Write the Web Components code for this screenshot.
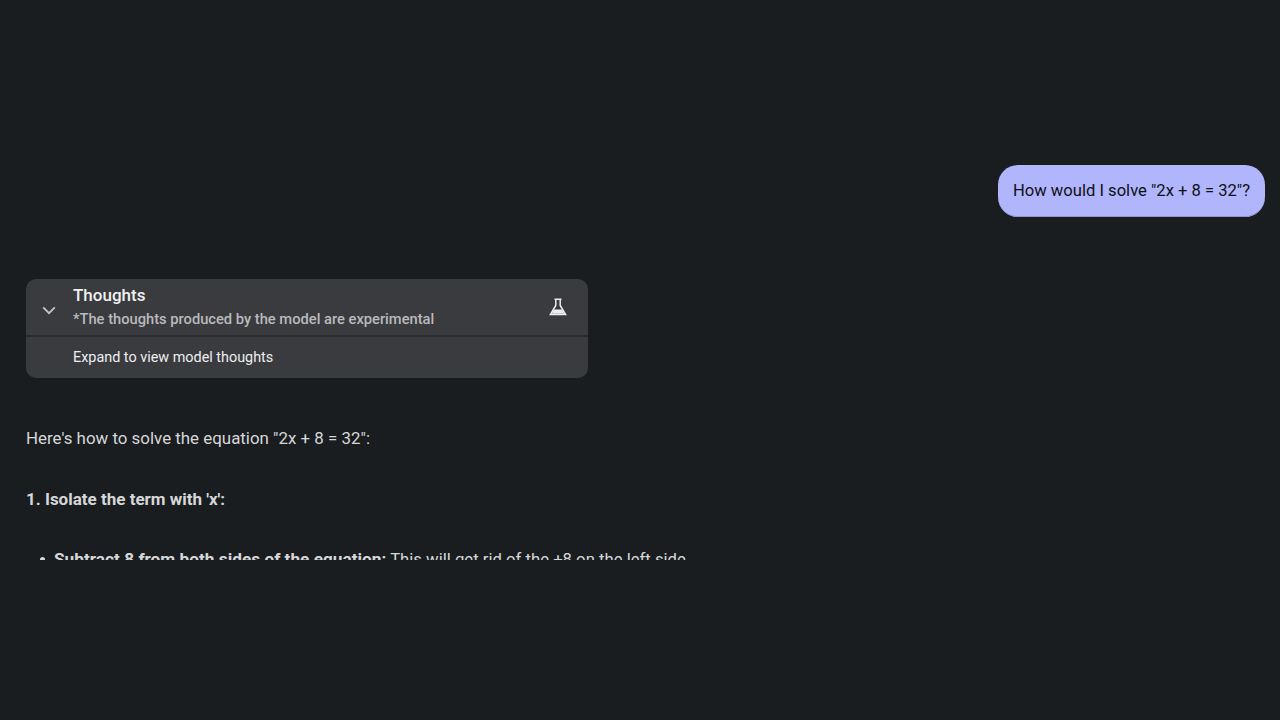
<!DOCTYPE html>
<html>
<head>
<meta charset="utf-8">
<style>
html,body{margin:0;height:100%;background:#1a1d20}
body{font-family:Roboto,"Liberation Sans",sans-serif}
</style>
</head>
<body>
<chat-view>
  <user-bubble>How would I solve "2x + 8 = 32"?</user-bubble>
  <thoughts-card title-text="Thoughts" note="*The thoughts produced by the model are experimental" hint="Expand to view model thoughts"></thoughts-card>
  <model-answer></model-answer>
</chat-view>
<script>
class ChatView extends HTMLElement {
  constructor() {
    super();
    this.attachShadow({ mode: "open" }).innerHTML = `
<style>
:host{display:flex;flex-direction:column;height:560px;overflow:hidden;box-sizing:border-box;padding:165px 15px 0 26px}
::slotted(*){flex:none}
</style>
<slot></slot>`;
  }
}
class UserBubble extends HTMLElement {
  constructor() {
    super();
    this.attachShadow({ mode: "open" }).innerHTML = `
<style>
:host{display:block;align-self:flex-end;box-sizing:border-box;height:52px;padding:0 15px;line-height:51px;border-radius:20px;background:#b1b5fb;color:#0f1116;font-size:16.6px;white-space:nowrap;box-shadow:inset 0 -1px 0 #8f93d0}
</style>
<slot></slot>`;
  }
}
class ThoughtsCard extends HTMLElement {
  constructor() {
    super();
    const root = this.attachShadow({ mode: "open" });
    root.innerHTML = `
<style>
:host{display:block;width:562px;margin-top:62px;background:#3a3b3f;border-radius:10px;overflow:hidden;color:#fff}
.head{display:flex;align-items:center;height:58px;box-sizing:border-box;border-bottom:2px solid #2a2b2f}
.chev{width:46px;display:flex;justify-content:center;flex:none;margin-top:7px}
.txt{flex:1;min-width:0;padding-left:1px}
.t{font-size:17px;font-weight:500;line-height:20px;margin-top:-1px;color:#f1f1f1}
.n{font-size:14.7px;font-weight:500;line-height:18px;margin-top:5px;color:#b9babb}
.flask{flex:none;margin-right:20px;margin-top:-1px}
.foot{height:41px;line-height:42px;padding-left:47px;font-size:14.4px;color:#eeeeef}
</style>
<div class="head">
  <div class="chev"><svg width="14" height="9" viewBox="0 0 14 9" fill="none" stroke="#c6c6c8" stroke-width="1.8"><path d="M1.2 1.4 7 7.2 12.8 1.4"/></svg></div>
  <div class="txt"><div class="t"></div><div class="n"></div></div>
  <svg class="flask" width="20" height="20" viewBox="0 0 20 20" fill="none"><path d="M6.5 2.2h7" stroke="#eee" stroke-width="1.5"/><path d="M7.8 2.5v6L2.4 17.6h15.2L12.2 8.500v-6" stroke="#eee" stroke-width="1.500"/><path d="M6 12.500h8l2.300 4.300H3.700z" fill="#eee"/></svg>
</div>
<div class="foot"></div>`;
    root.querySelector(".t").textContent = this.getAttribute("title-text");
    root.querySelector(".n").textContent = this.getAttribute("note");
    root.querySelector(".foot").textContent = this.getAttribute("hint");
  }
}
class ModelAnswer extends HTMLElement {
  constructor() {
    super();
    this.attachShadow({ mode: "open" }).innerHTML = `
<style>
:host{display:block;margin-top:50px;color:#d6d7d8;font-size:16.9px;line-height:20px}
p{margin:0 0 41px}
p + p{margin-bottom:40px}
b{font-weight:700;font-size:17px}
ul{margin:0;padding:0 0 0 28px;font-size:16.7px;list-style:none}
li b{font-size:17.25px}
li::before{content:"";display:inline-block;width:5px;height:5px;border-radius:50%;background:#d6d7d8;margin:0 9px 3px -14px;vertical-align:middle}
</style>
<p>Here's how to solve the equation "2x + 8 = 32":</p>
<p><b>1. Isolate the term with 'x':</b></p>
<ul><li><b>Subtract 8 from both sides of the equation:</b> This will get rid of the +8 on the left side.</li></ul>`;
  }
}
customElements.define("chat-view", ChatView);
customElements.define("user-bubble", UserBubble);
customElements.define("thoughts-card", ThoughtsCard);
customElements.define("model-answer", ModelAnswer);
</script>
</body>
</html>
